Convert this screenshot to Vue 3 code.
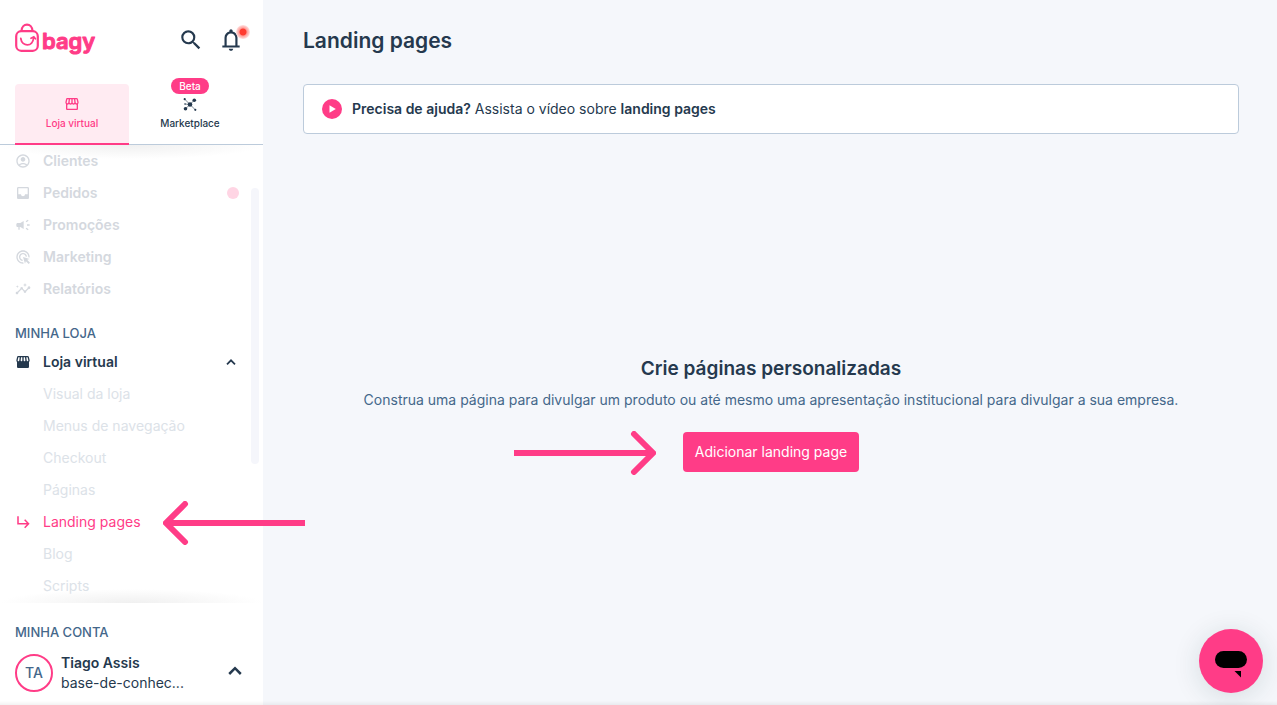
<script setup>
const storefrontTop =
  'M21.9 8.89l-1.05-4.37c-.22-.9-1-1.52-1.91-1.52H5.05c-.9 0-1.69.63-1.9 1.52L2.1 8.89c-.24 1.02-.02 2.06.62 2.88.08.11.19.19.28.29V19c0 1.1.9 2 2 2h14c1.1 0 2-.9 2-2v-6.94c.09-.09.2-.18.28-.28.64-.82.87-1.87.62-2.89zm-2.99-3.9l1.05 4.37c.1.42.01.84-.25 1.17-.14.18-.44.47-.94.47-.61 0-1.14-.49-1.21-1.14L16.98 5l1.93-.01zM13 5h1.96l.54 4.52c.05.39-.07.78-.33 1.07-.22.26-.54.41-.95.41-.67 0-1.22-.59-1.22-1.31V5zM8.49 9.52L9.04 5H11v4.69c0 .72-.55 1.31-1.29 1.31-.34 0-.65-.15-.89-.41-.25-.29-.37-.68-.33-1.07zm-4.45-.16L5.05 5h1.97l-.58 4.86c-.08.65-.6 1.14-1.21 1.14-.49 0-.8-.29-.93-.47-.27-.32-.36-.75-.26-1.17z'
const storefrontBody =
  'M5 19v-6.03c.08.01.15.03.23.03.87 0 1.66-.36 2.24-.95.6.6 1.4.95 2.31.95.87 0 1.65-.36 2.23-.93.59.57 1.39.93 2.29.93.84 0 1.64-.35 2.24-.95.58.59 1.37.95 2.24.95.08 0 .15-.02.23-.03V19H5z'

const mainLinks = [
  {
    label: 'Clientes',
    icon: 'M12 2C6.48 2 2 6.48 2 12s4.48 10 10 10 10-4.48 10-10S17.52 2 12 2zM7.35 18.5C8.66 17.56 10.26 17 12 17s3.34.56 4.65 1.5C15.34 19.44 13.74 20 12 20s-3.34-.56-4.65-1.5zm10.79-1.38C16.45 15.8 14.32 15 12 15s-4.45.8-6.14 2.12C4.7 15.73 4 13.95 4 12c0-4.42 3.58-8 8-8s8 3.58 8 8c0 1.95-.7 3.73-1.86 5.12zM12 6c-1.93 0-3.5 1.57-3.5 3.5S10.07 13 12 13s3.5-1.57 3.5-3.5S13.93 6 12 6z',
  },
  {
    label: 'Pedidos',
    dot: true,
    icon: 'M19 3H4.99c-1.11 0-1.98.89-1.98 2L3 19c0 1.1.88 2 1.99 2H19c1.1 0 2-.9 2-2V5c0-1.11-.9-2-2-2zm0 11h-4c0 1.66-1.35 3-3 3s-3-1.34-3-3H4.99V5H19v9z',
  },
  {
    label: 'Promoções',
    icon: 'M18 11v2h4v-2h-4zM16 17.61c.96.71 2.21 1.65 3.2 2.39.4-.53.8-1.07 1.2-1.6-.99-.74-2.24-1.68-3.2-2.4-.4.54-.8 1.08-1.2 1.61zM20.4 5.6c-.4-.53-.8-1.07-1.2-1.6-.99.74-2.24 1.68-3.2 2.4.4.53.8 1.07 1.2 1.6.96-.72 2.21-1.65 3.2-2.4zM4 9c-1.1 0-2 .9-2 2v2c0 1.1.9 2 2 2h1v4h2v-4h1l5 3V6L8 9H4z',
  },
  {
    label: 'Marketing',
    icon: 'M11.71 17.99C8.53 17.84 6 15.22 6 12c0-3.31 2.69-6 6-6 3.22 0 5.84 2.53 5.99 5.71l-2.1-.63C15.48 9.31 13.89 8 12 8c-2.21 0-4 1.79-4 4 0 1.89 1.31 3.48 3.08 3.89l.63 2.1zM22 12c0 .3-.01.6-.04.9l-1.97-.59c.01-.1.01-.21.01-.31 0-4.42-3.58-8-8-8s-8 3.58-8 8 3.58 8 8 8c.1 0 .21 0 .31-.01l.59 1.97c-.3.03-.6.04-.9.04-5.52 0-10-4.48-10-10S6.48 2 12 2s10 4.48 10 10zm-3.77 4.26L22 15l-10-3 3 10 1.26-3.77 4.27 4.27 1.98-1.98-4.28-4.26z',
  },
  {
    label: 'Relatórios',
    icon: 'M21 8c-1.45 0-2.26 1.44-1.93 2.51l-3.55 3.56c-.3-.09-.74-.09-1.04 0l-2.55-2.55C12.27 10.45 11.46 9 10 9c-1.45 0-2.27 1.44-1.93 2.52l-4.56 4.55C2.44 15.74 1 16.55 1 18c0 1.1.9 2 2 2 1.45 0 2.26-1.44 1.93-2.51l4.55-4.56c.3.09.74.09 1.04 0l2.55 2.55C12.73 16.55 13.54 18 15 18c1.45 0 2.27-1.44 1.93-2.52l3.56-3.55C21.56 12.26 23 11.45 23 10c0-1.1-.9-2-2-2zM15 9l.94-2.07L18 6l-2.06-.93L15 3l-.92 2.07L12 6l2.08.93zM3.5 11L4 9l2-.5L4 8l-.5-2L3 8l-2 .5L3 9z',
  },
]

const storeLinks = [
  { label: 'Visual da loja' },
  { label: 'Menus de navegação' },
  { label: 'Checkout' },
  { label: 'Páginas' },
  { label: 'Landing pages', active: true },
  { label: 'Blog' },
  { label: 'Scripts' },
]
</script>

<template>
  <div class="app">
    <aside class="sidebar">
      <header class="top">
        <div class="brand-row">
          <a href="#" class="brand" aria-label="bagy">
            <svg width="90" height="36" viewBox="0 0 90 36">
              <g fill="none" stroke="#ff3c87" stroke-width="2.2" stroke-linecap="round">
                <rect x="1.2" y="9.2" width="21.6" height="19.6" rx="5" />
                <path d="M6.5 9c.3-8.500 10.700-8.500 11 0" />
                <path d="M5.800 16.500c1.200 8.500 12.200 9 12.800-1M16 16.200l2.800-1.400 1.600 2" stroke-width="1.800" />
              </g>
              <text class="wordmark" x="27" y="27">bagy</text>
            </svg>
          </a>
          <div class="actions">
            <button class="icon-btn" type="button" aria-label="Buscar">
              <svg width="26" height="26" viewBox="0 0 24 24"><path d="M15.500 14h-.79l-.28-.27A6.471 6.471 0 0 0 16 9.500 6.500 6.500 0 1 0 9.500 16c1.610 0 3.090-.59 4.230-1.570l.27.28v.79l5 4.990L20.490 19l-4.990-5zm-6 0C7.010 14 5 11.990 5 9.500S7.010 5 9.500 5 14 7.010 14 9.500 11.990 14 9.500 14z" /></svg>
            </button>
            <button class="icon-btn" type="button" aria-label="Notificações">
              <svg width="26" height="26" viewBox="0 0 24 24"><path d="M4 19v-2h2v-7q0-2.075 1.250-3.688T10.500 4.200v-.7q0-.625.438-1.062T12 2t1.063.438T13.500 3.500v.7q2 .5 3.250 2.113T18 10v7h2v2zm8 3q-.825 0-1.412-.587T10 20h4q0 .825-.587 1.413T12 22m-4-5h8v-7q0-1.650-1.175-2.825T12 6T9.175 7.175T8 10z" /></svg>
              <span class="alert-dot"></span>
            </button>
          </div>
        </div>
        <div class="tabs">
          <button class="tab active" type="button">
            <svg width="16" height="16" viewBox="0 0 24 24"><path :d="storefrontTop + storefrontBody" fill-rule="evenodd" /></svg>
            <span>Loja virtual</span>
          </button>
          <button class="tab" type="button">
            <span class="beta">Beta</span>
            <svg width="16" height="16" viewBox="0 0 16 16">
              <path d="M2.700 3.200L13.300 13.800M12.300 4.200L3.500 12.800M3 8L8 8.500" fill="none" stroke="currentColor" stroke-width=".6" />
              <circle cx="8" cy="8.500" r="2.300" /><circle cx="12.300" cy="4.200" r="1.800" /><circle cx="3.500" cy="12.800" r="1.800" />
              <circle cx="2.700" cy="3.200" r="1.100" /><circle cx="13.300" cy="13.800" r="1.100" /><circle cx="3" cy="8" r=".8" />
            </svg>
            <span>Marketplace</span>
          </button>
        </div>
      </header>

      <nav class="nav">
        <a v-for="link in mainLinks" :key="link.label" href="#" class="nav-link faded">
          <svg width="16" height="16" viewBox="0 0 24 24"><path :d="link.icon" /></svg>
          <span>{{ link.label }}</span>
          <i v-if="link.dot" class="count-dot"></i>
        </a>
        <h2 class="caption store-caption">MINHA LOJA</h2>
        <button class="nav-link group" type="button" aria-expanded="true">
          <svg width="16" height="16" viewBox="0 0 24 24"><path :d="storefrontTop" fill-rule="evenodd" /></svg>
          <span>Loja virtual</span>
          <svg class="chevron" width="16" height="16" viewBox="0 0 24 24"><path d="M6 15.500l6-6 6 6" fill="none" stroke="currentColor" stroke-width="2.600" /></svg>
        </button>
        <a v-for="link in storeLinks" :key="link.label" href="#" class="nav-link sub" :class="{ current: link.active }">
          <svg width="16" height="16" viewBox="0 0 24 24">
            <path v-if="link.active" d="M4.500 3.500v11h15M14.500 8.500l5.800 6-5.800 6" fill="none" stroke="currentColor" stroke-width="2.300" />
          </svg>
          <span>{{ link.label }}</span>
          <svg v-if="link.active" class="arrow arrow-left" width="142" height="44" viewBox="0 0 142 44">
            <path d="M5 22H142" />
            <path d="M22 3L3 22l19 19" stroke-linecap="round" />
          </svg>
        </a>
        <span class="scrollbar"></span>
      </nav>

      <footer class="account">
        <h2 class="caption">MINHA CONTA</h2>
        <button class="user" type="button">
          <span class="avatar">TA</span>
          <span class="user-text"><strong>Tiago Assis</strong><span>base-de-conhec...</span></span>
          <svg class="chevron" width="24" height="24" viewBox="0 0 24 24"><path d="M6.200 13L12 7.200l5.800 5.800" fill="none" stroke="currentColor" stroke-width="2.500" /></svg>
        </button>
      </footer>
    </aside>

    <main class="main">
      <h1>Landing pages</h1>
      <a href="#" class="help">
        <svg width="20" height="20" viewBox="0 0 20 20"><circle cx="10" cy="10" r="10" fill="#ff3c87" /><path d="M7.500 6.200v7.600l6.300-3.800z" fill="#fff" /></svg>
        <span><strong>Precisa de ajuda?</strong> Assista o vídeo sobre <strong>landing pages</strong></span>
      </a>
      <section class="empty">
        <h2>Crie páginas personalizadas</h2>
        <p>Construa uma página para divulgar um produto ou até mesmo uma apresentação institucional para divulgar a sua empresa.</p>
        <div class="cta">
          <button type="button">Adicionar landing page</button>
          <svg class="arrow arrow-right" width="142" height="44" viewBox="0 0 142 44">
            <path d="M0 22H137" />
            <path d="M120 3l19 19-19 19" stroke-linecap="round" />
          </svg>
        </div>
      </section>
    </main>

    <button class="chat" type="button" aria-label="Abrir chat">
      <svg width="32" height="28" viewBox="0 0 32 28"><rect width="32" height="17" rx="8.500" /><path d="M19.500 20h6.500v6.500z" /></svg>
    </button>
    <div class="edge"></div>
  </div>
</template>

<style>
body {
  margin: 0;
  background: #f5f7fb;
}
</style>

<style scoped>
.app {
  display: flex;
  min-height: 100vh;
  font-family: Inter, "Liberation Sans", sans-serif;
  font-size: 14px;
  line-height: 20px;
  color: #25394e;
}
.app * {
  box-sizing: border-box;
}
svg {
  display: block;
  flex: none;
  fill: currentColor;
}
a {
  color: inherit;
  text-decoration: none;
}
button {
  padding: 0;
  border: 0;
  background: none;
  font: inherit;
  color: inherit;
  cursor: pointer;
}
h1,
h2,
p {
  margin: 0;
}
strong {
  font-weight: 600;
}
.sidebar {
  display: flex;
  flex: none;
  flex-direction: column;
  width: 263px;
  background: #fff;
}
.top {
  border-bottom: 1px solid #bccbdb;
}
.brand-row {
  display: flex;
  align-items: center;
  justify-content: space-between;
  height: 80px;
  padding: 0 19px 0 15px;
}
.wordmark {
  font-size: 22px;
  font-weight: 600;
  fill: #ff3c87;
  stroke: #ff3c87;
  stroke-width: 1px;
  stroke-linejoin: round;
}
.actions {
  display: flex;
  gap: 14px;
}
.icon-btn {
  position: relative;
}
.alert-dot {
  position: absolute;
  top: -2px;
  right: -6px;
  width: 14px;
  height: 14px;
  border-radius: 50%;
  background: radial-gradient(circle, #ff3b30 3px, #ff9f9b 4px, #ffb3b0 5px, #ffe3e2 7px);
}
.tabs {
  display: flex;
  gap: 4px;
  height: 64px;
  padding: 4px 16px 0 15px;
}
.tab {
  position: relative;
  display: flex;
  flex: 1;
  flex-direction: column;
  align-items: center;
  gap: 3px;
  padding-top: 12px;
  font-size: 10px;
  font-weight: 500;
  line-height: 16px;
  border-radius: 4px 4px 0 0;
}
.tab.active {
  margin-bottom: -1px;
  border-bottom: 2px solid #ff3c87;
  background: #ffebf2;
  color: #ff3c87;
}
.beta {
  position: absolute;
  top: -6px;
  padding: 0 8px;
  border-radius: 8px;
  background: #ff3c87;
  color: #fff;
}
.nav {
  position: relative;
  display: flex;
  flex: 1;
  flex-direction: column;
  background:
    radial-gradient(farthest-side at 50% 0, #f0f0f0, #ffffff) top / 100% 14px no-repeat,
    radial-gradient(farthest-side at 50% 100%, #f0f0f0, #ffffff) bottom / 100% 14px no-repeat;
}
.nav-link {
  position: relative;
  display: flex;
  align-items: center;
  gap: 12px;
  height: 32px;
  padding: 0 24px 0 15px;
  font-weight: 600;
  text-align: left;
}
.faded {
  color: #d4d8de;
}
.count-dot {
  width: 12px;
  height: 12px;
  margin-left: auto;
  border-radius: 50%;
  background: #ffd5e4;
}
.caption {
  font-size: 13px;
  font-weight: 500;
  line-height: 16px;
  color: #44678a;
}
.store-caption {
  padding: 20px 15px 5px;
}
.chevron {
  margin-left: auto;
}
.sub {
  font-weight: 400;
  color: #dce2e8;
}
.current {
  color: #ff3c87;
}
.arrow {
  position: absolute;
  z-index: 1;
  fill: none;
  stroke: #ff3c87;
  stroke-width: 6px;
}
.arrow-left {
  top: -5px;
  left: 163px;
}
.arrow-right {
  top: -1px;
  right: calc(100% + 27px);
}
.scrollbar {
  position: absolute;
  top: 43px;
  right: 4px;
  width: 8px;
  height: 276px;
  border-radius: 4px;
  background: #f5f6fb;
}
.account {
  padding: 21px 16px 12px 15px;
}
.user {
  display: flex;
  align-items: center;
  gap: 8px;
  width: 100%;
  margin-top: 13px;
  text-align: left;
}
.avatar {
  display: grid;
  place-items: center;
  width: 38px;
  height: 38px;
  border: 2px solid #ff3c87;
  border-radius: 50%;
  color: #44678a;
  font-weight: 500;
}
.user-text {
  display: flex;
  flex-direction: column;
}
.main {
  display: flex;
  flex: 1;
  flex-direction: column;
  min-width: 0;
  padding: 24px 38px 0 40px;
}
h1 {
  font-size: 21px;
  font-weight: 600;
  line-height: 34px;
}
.help {
  display: flex;
  align-items: center;
  gap: 10px;
  height: 50px;
  margin-top: 26px;
  padding: 0 18px;
  border: 1px solid #bccbdb;
  border-radius: 4px;
  background: #fff;
}
.empty {
  display: flex;
  flex: 1;
  flex-direction: column;
  align-items: center;
  justify-content: center;
  padding-bottom: 14px;
  text-align: center;
}
.empty h2 {
  font-size: 19px;
  font-weight: 600;
  line-height: 30px;
}
.empty p {
  margin-top: 6px;
  color: #44678a;
}
.cta {
  position: relative;
  margin-top: 22px;
}
.cta button {
  height: 40px;
  padding: 0 12px;
  border-radius: 4px;
  background: #ff3c87;
  color: #fff;
}
.chat {
  position: fixed;
  right: 14px;
  bottom: 12px;
  display: grid;
  place-items: center;
  width: 64px;
  height: 64px;
  padding-top: 8px;
  border-radius: 50%;
  background: #ff3c87;
  color: #000;
  box-shadow: 0 4px 28px rgba(20, 60, 60, 0.14);
}
.edge {
  position: fixed;
  right: 0;
  bottom: 0;
  left: 0;
  height: 4px;
  background: linear-gradient(transparent, rgba(0, 0, 0, 0.05));
}
</style>
